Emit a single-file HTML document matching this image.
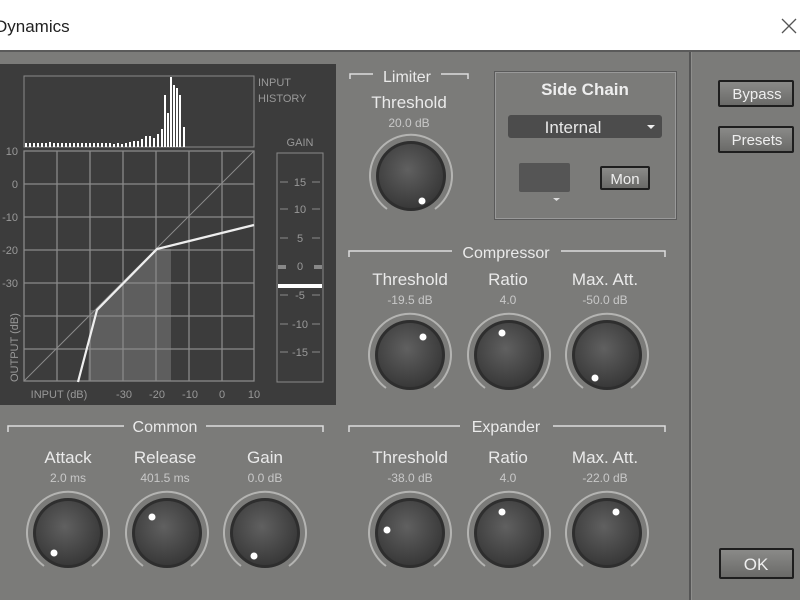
<!DOCTYPE html>
<html><head><style>
body{margin:0;width:800px;height:600px;overflow:hidden;background:#7b7b79;font-family:"Liberation Sans",sans-serif;}
svg{display:block}
</style></head><body>
<svg width="800" height="600" xmlns="http://www.w3.org/2000/svg" font-family="Liberation Sans, sans-serif">
<defs>
<radialGradient id="kg" cx="45%" cy="40%" r="60%">
<stop offset="0" stop-color="#606060"/><stop offset="1" stop-color="#393939"/>
</radialGradient>
<linearGradient id="bg" x1="0" y1="0" x2="0" y2="1"><stop offset="0" stop-color="#8a8a88"/><stop offset="1" stop-color="#6a6a68"/></linearGradient>
<g id="knob">
<path d="M -24 33 A 41 41 0 1 1 24 33" fill="none" stroke="#b4b4b2" stroke-width="2"/>
<circle r="35" fill="#2e2e2e"/>
<circle r="32" fill="url(#kg)"/>
</g>
</defs>
<rect width="800" height="50" fill="#fff"/>
<rect y="50" width="800" height="2" fill="#5a5a5a"/>
<text x="-5" y="32" font-size="17" fill="#222">Dynamics</text>
<path d="M782 19 L796 33 M796 19 L782 33" stroke="#555" stroke-width="1.3"/>
<rect x="689" y="52" width="2" height="548" fill="#555"/>
<rect x="691" y="52" width="1" height="548" fill="#8e8e8c"/>
<rect x="0" y="64" width="336" height="341" fill="#3c3c3c"/>
<rect x="24" y="76" width="230" height="71" fill="none" stroke="#8a8a8a"/>
<g fill="#fff">
<rect x="25" y="143" width="2" height="4"/><rect x="29" y="143" width="2" height="4"/><rect x="33" y="143" width="2" height="4"/><rect x="37" y="143" width="2" height="4"/><rect x="41" y="143" width="2" height="4"/><rect x="45" y="143" width="2" height="4"/><rect x="49" y="142" width="2" height="5"/><rect x="53" y="143" width="2" height="4"/><rect x="57" y="143" width="2" height="4"/><rect x="61" y="143" width="2" height="4"/><rect x="65" y="143" width="2" height="4"/><rect x="69" y="143" width="2" height="4"/><rect x="73" y="143" width="2" height="4"/><rect x="77" y="143" width="2" height="4"/><rect x="81" y="143" width="2" height="4"/><rect x="85" y="143" width="2" height="4"/><rect x="89" y="143" width="2" height="4"/><rect x="93" y="143" width="2" height="4"/><rect x="97" y="143" width="2" height="4"/><rect x="101" y="143" width="2" height="4"/><rect x="105" y="143" width="2" height="4"/><rect x="109" y="143" width="2" height="4"/><rect x="113" y="144" width="2" height="3"/><rect x="117" y="143" width="2" height="4"/><rect x="121" y="144" width="2" height="3"/><rect x="125" y="143" width="2" height="4"/><rect x="129" y="142" width="2" height="5"/><rect x="133" y="141" width="2" height="6"/><rect x="137" y="141" width="2" height="6"/><rect x="141" y="139" width="2" height="8"/><rect x="145" y="136" width="2" height="11"/><rect x="149" y="136" width="2" height="11"/><rect x="153" y="138" width="2" height="9"/><rect x="157" y="134" width="2" height="13"/><rect x="161" y="129" width="2" height="18"/><rect x="164" y="95" width="2" height="52"/><rect x="167" y="113" width="2" height="34"/><rect x="170" y="77" width="2" height="70"/><rect x="173" y="85" width="2" height="62"/><rect x="176" y="88" width="2" height="59"/><rect x="179" y="95" width="2" height="52"/><rect x="183" y="127" width="2" height="20"/>
</g>
<text x="258" y="86" font-size="11" fill="#999">INPUT</text>
<text x="258" y="102" font-size="11" fill="#999">HISTORY</text>
<polygon points="90,310 97,310 157,249 171,249 171,381 88,381" fill="#5e5e5e"/>
<g stroke="#8a8a8a" stroke-width="1.3" fill="none">
<rect x="24" y="151" width="230" height="230"/>
<path d="M57 151V381M90 151V381M123 151V381M156 151V381M189 151V381M222 151V381M24 184H254M24 217H254M24 250H254M24 283H254M24 316H254M24 349H254"/>
<path d="M24 381L254 151" stroke-width="1"/>
</g>
<polyline points="78,382 97,310 157,249 254,225" fill="none" stroke="#eee" stroke-width="2.2"/>
<g font-size="11" fill="#999" text-anchor="end">
<text x="18" y="155">10</text><text x="18" y="188">0</text><text x="18" y="221">-10</text><text x="18" y="254">-20</text><text x="18" y="287">-30</text>
</g>
<text transform="translate(18,382) rotate(-90)" font-size="11" fill="#999">OUTPUT (dB)</text>
<g font-size="11" fill="#999" text-anchor="middle">
<text x="59" y="398">INPUT (dB)</text><text x="124" y="398">-30</text><text x="157" y="398">-20</text><text x="190" y="398">-10</text><text x="222" y="398">0</text><text x="254" y="398">10</text>
<text x="300" y="146">GAIN</text>
</g>
<rect x="277" y="153" width="46" height="229" fill="none" stroke="#8a8a8a"/>
<g stroke="#8a8a8a" fill="none"><path d="M280 182h8M312 182h8M280 209h8M312 209h8M280 238h8M312 238h8M280 295h8M312 295h8M280 324h8M312 324h8M280 352h8M312 352h8"/></g>
<rect x="278" y="265" width="8" height="4" fill="#888"/><rect x="314" y="265" width="8" height="4" fill="#888"/>
<rect x="278" y="284" width="44" height="4" fill="#fff"/>
<g font-size="11" fill="#999" text-anchor="middle">
<text x="300" y="186">15</text><text x="300" y="213">10</text><text x="300" y="242">5</text><text x="300" y="270">0</text><text x="300" y="299">-5</text><text x="300" y="328">-10</text><text x="300" y="356">-15</text>
</g>
<g stroke="#ddd" stroke-width="1.5" fill="none">
<path d="M350 79V74H373M441 74H468V79"/>
<path d="M349 257V251H452M561 251H665V257"/>
<path d="M349 432V426H460M553 426H665V432"/>
<path d="M8 432V426H124M206 426H323V432"/>
</g>
<g fill="#eaeaea" text-anchor="middle" font-size="16">
<text x="407" y="82">Limiter</text>
<text x="506" y="258">Compressor</text>
<text x="506" y="432">Expander</text>
<text x="165" y="432">Common</text>
<text x="409" y="108" font-size="17">Threshold</text>
<text x="410" y="285" font-size="17">Threshold</text><text x="508" y="285" font-size="17">Ratio</text><text x="605" y="285" font-size="17">Max. Att.</text>
<text x="410" y="463" font-size="17">Threshold</text><text x="508" y="463" font-size="17">Ratio</text><text x="605" y="463" font-size="17">Max. Att.</text>
<text x="68" y="463" font-size="17">Attack</text><text x="165" y="463" font-size="17">Release</text><text x="265" y="463" font-size="17">Gain</text>
</g>
<g fill="#c8c8c8" text-anchor="middle" font-size="12">
<text x="409" y="127">20.0 dB</text>
<text x="410" y="304">-19.5 dB</text><text x="508" y="304">4.0</text><text x="605" y="304">-50.0 dB</text>
<text x="410" y="482">-38.0 dB</text><text x="508" y="482">4.0</text><text x="605" y="482">-22.0 dB</text>
<text x="68" y="482">2.0 ms</text><text x="165" y="482">401.5 ms</text><text x="265" y="482">0.0 dB</text>
</g>
<g fill="#fff">
<use href="#knob" x="411" y="176"/><circle cx="422" cy="201" r="3.5"/>
<use href="#knob" x="410" y="355"/><circle cx="423" cy="337" r="3.5"/>
<use href="#knob" x="509" y="355"/><circle cx="502" cy="333" r="3.5"/>
<use href="#knob" x="607" y="355"/><circle cx="595" cy="378" r="3.5"/>
<use href="#knob" x="410" y="533"/><circle cx="387" cy="530" r="3.5"/>
<use href="#knob" x="509" y="533"/><circle cx="502" cy="512" r="3.5"/>
<use href="#knob" x="607" y="533"/><circle cx="616" cy="512" r="3.5"/>
<use href="#knob" x="68" y="533"/><circle cx="54" cy="553" r="3.5"/>
<use href="#knob" x="167" y="533"/><circle cx="152" cy="517" r="3.5"/>
<use href="#knob" x="265" y="533"/><circle cx="254" cy="556" r="3.5"/>
</g>
<rect x="494.5" y="71.5" width="182" height="148" fill="none" stroke="#5a5a5a"/>
<rect x="495.5" y="72.5" width="180" height="146" fill="none" stroke="#999"/>
<text x="585" y="95" font-size="17" font-weight="bold" fill="#eee" text-anchor="middle">Side Chain</text>
<rect x="508" y="115" width="154" height="23" rx="3" fill="#4c4c4c"/>
<text x="573" y="133" font-size="17" fill="#e8e8e8" text-anchor="middle">Internal</text>
<path d="M647 125h8l-4 4z" fill="#eee"/>
<rect x="519" y="163" width="51" height="29" rx="2" fill="#555"/>
<path d="M553 198h7l-3.5 3z" fill="#ddd"/>
<rect x="600" y="166" width="50" height="24" rx="2" fill="#1e1e1e"/>
<rect x="602" y="168" width="46" height="20" fill="url(#bg)"/>
<text x="625" y="184" font-size="15" fill="#eee" text-anchor="middle">Mon</text>
<rect x="718" y="80" width="76" height="27" rx="2" fill="#1e1e1e"/><rect x="720" y="82" width="72" height="23" fill="url(#bg)"/>
<text x="757" y="99" font-size="15" fill="#eee" text-anchor="middle">Bypass</text>
<rect x="718" y="126" width="76" height="27" rx="2" fill="#1e1e1e"/><rect x="720" y="128" width="72" height="23" fill="url(#bg)"/>
<text x="757" y="145" font-size="15" fill="#eee" text-anchor="middle">Presets</text>
<rect x="719" y="548" width="75" height="31" rx="2" fill="#1e1e1e"/><rect x="721" y="550" width="71" height="27" fill="url(#bg)"/>
<text x="756" y="570" font-size="17" fill="#eee" text-anchor="middle">OK</text>
</svg>
</body></html>
